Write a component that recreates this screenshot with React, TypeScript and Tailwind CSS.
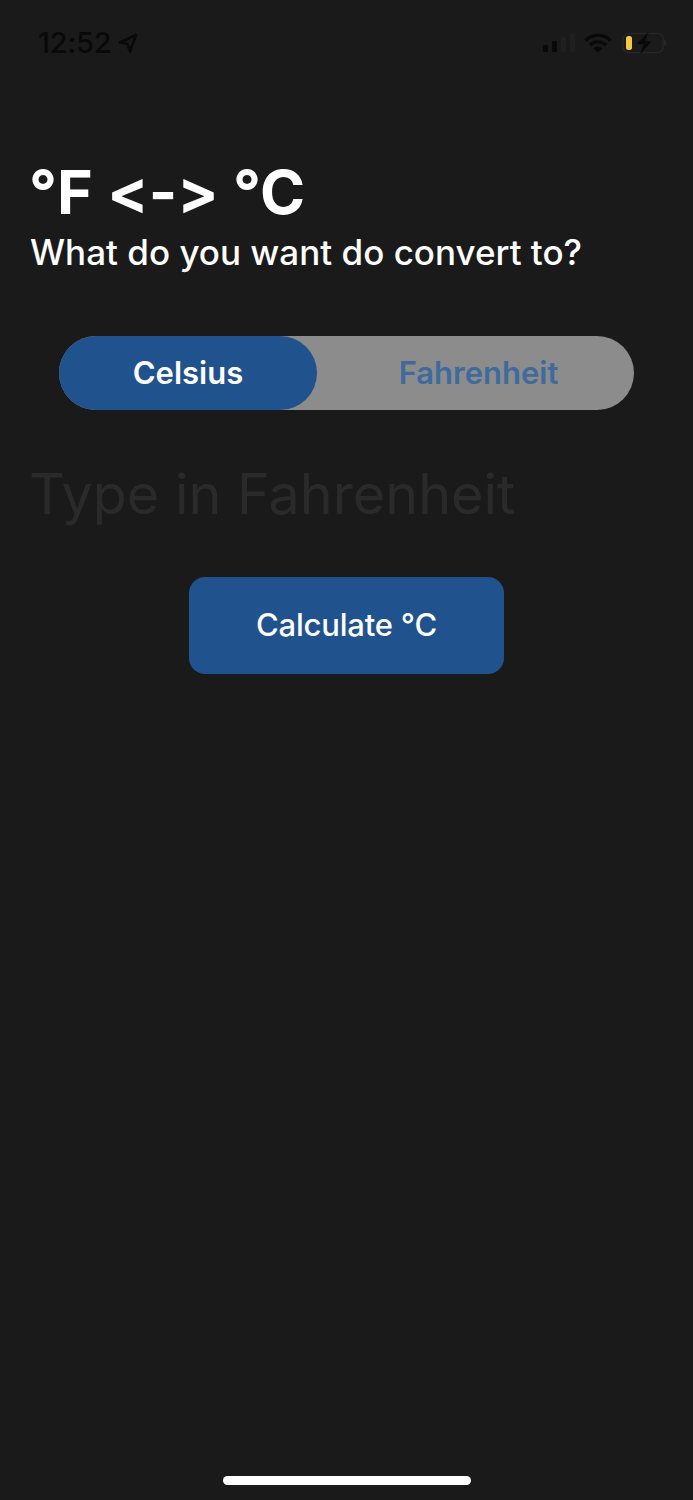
export default function App() {
  return (
    <div className="flex flex-col h-[1500px] bg-[#1a1a1a] font-['Inter',sans-serif] [font-feature-settings:'calt'_0,'liga'_0]">
      {/* Status bar */}
      <div className="flex items-center justify-between h-[30px] mt-[28px] pl-[38px] pr-[27px]">
        <div className="flex items-center gap-[6px]">
          <span className="text-[#090909] text-[29px] leading-[30px] font-medium tracking-[-0.2px]">12:52</span>
          <svg width="20" height="20" viewBox="0 0 20 20" fill="none" stroke="#090909" strokeWidth="2.6" strokeLinejoin="round">
            <path d="M18 2 2 9.5l7.5 1.6L12 18.5z" />
          </svg>
        </div>
        <div className="flex items-center">
          <svg width="32" height="20" viewBox="0 0 32 20" fill="#090909">
            <rect x="0" y="12" width="5" height="7" rx="1" />
            <rect x="9" y="8" width="5" height="11" rx="1" />
            <rect x="18" y="4" width="5" height="15" rx="1" fill="#1f1f1f" />
            <rect x="27" y="0" width="5" height="19" rx="1" fill="#1f1f1f" />
          </svg>
          <svg width="28" height="20" viewBox="0 0 28 20" fill="none" stroke="#090909" strokeWidth="3.2" className="ml-[9px]">
            <path d="M1.5 7.5a18 18 0 0 1 25 0" />
            <path d="M6 12a11.5 11.5 0 0 1 16 0" />
            <path d="M14 19.5l-4.5-4.2a6.5 6.5 0 0 1 9 0z" fill="#090909" stroke="none" />
          </svg>
          <svg width="44" height="24" viewBox="0 0 44 24" fill="none" className="ml-[10px]">
            <rect x="1" y="2.5" width="40" height="19" rx="5" stroke="#262626" strokeWidth="1.5" />
            <rect x="42" y="9" width="2" height="6" rx="1" fill="#262626" />
            <rect x="4" y="5" width="6" height="14" rx="2.5" fill="#f4c93f" />
            <path d="M27 0 14 13.5h7l-3 10.5 12-14h-6.500z" fill="#090909" stroke="#1a1a1a" strokeWidth="0.8" />
          </svg>
        </div>
      </div>

      {/* Heading */}
      <div className="flex flex-col pl-[29px] mt-[98px]">
        <h1 className="text-white text-[61px] leading-[72px] font-bold">°F &lt;-&gt; °C</h1>
        <p className="text-white text-[35px] leading-[42px] font-medium mt-[3px] ml-[1px]">What do you want do convert to?</p>
      </div>

      {/* Toggle */}
      <div className="flex ml-[59px] mt-[63px] w-[575px] h-[74px] rounded-full bg-[#8c8c8c]">
        <div className="flex items-center justify-center w-[258px] rounded-full bg-[#20528e]">
          <span className="text-white text-[31px] font-semibold">Celsius</span>
        </div>
        <div className="flex flex-1 items-center justify-center pl-[6px]">
          <span className="text-[#3f6a9c] text-[31px] font-semibold">Fahrenheit</span>
        </div>
      </div>

      {/* Input */}
      <div className="pl-[29px] mt-[44px]">
        <input
          type="text"
          placeholder="Type in Fahrenheit"
          className="w-full h-[80px] bg-transparent text-[55.700px] text-white placeholder:text-[#2a2a2a] focus:outline-none"
        />
      </div>

      {/* Calculate button */}
      <div className="flex justify-center mt-[43px]">
        <button className="w-[315px] h-[97px] rounded-[16px] bg-[#20528e] text-white text-[31px] font-medium tracking-[-0.2px]">
          Calculate °C
        </button>
      </div>

      {/* Home indicator */}
      <div className="flex justify-center mt-auto mb-[15px]">
        <div className="w-[248px] h-[9px] rounded-full bg-white" />
      </div>
    </div>
  );
}
